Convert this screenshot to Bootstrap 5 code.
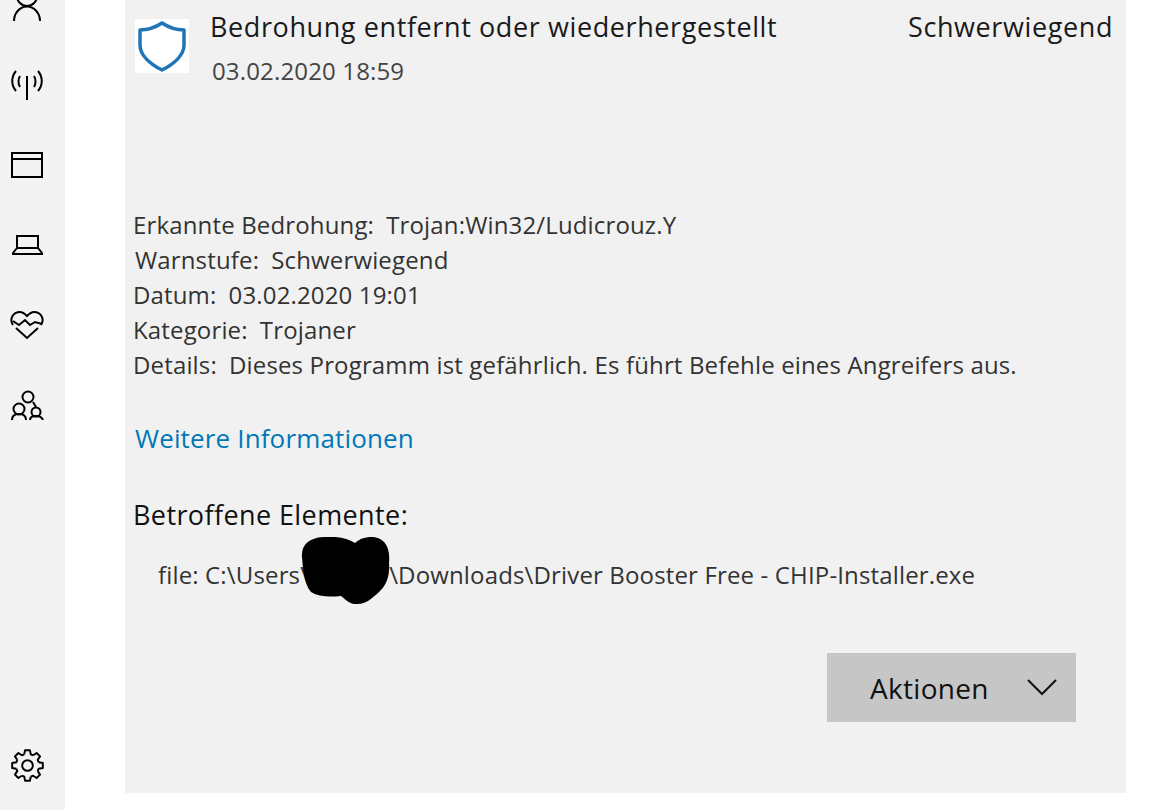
<!DOCTYPE html>
<html lang="de">
<head>
    <meta charset="UTF-8">
    <meta name="viewport" content="width=device-width, initial-scale=1.0">
    <title>Bedrohung entfernt</title>
    <link href="https://cdn.jsdelivr.net/npm/bootstrap@5.3.0/dist/css/bootstrap.min.css" rel="stylesheet">
    <style>
        html, body {
            height: 810px;
            overflow: hidden;
            background: #fff;
        }
        body {
            font-family: "Open Sans", "Noto Sans", sans-serif;
            font-size: 24px;
            color: #333;
            letter-spacing: 0.15px;
        }
        .side-bar {
            width: 65px;
            height: 810px;
            background: #f3f3f3;
            flex: none;
            padding-right: 11px;
        }
        .side-slot {
            height: 80px;
        }
        .side-slot svg, .gear-slot svg, .side-top svg {
            display: block;
            fill: none;
            stroke: #000;
            stroke-width: 2;
        }
        .side-top {
            height: 45px;
        }
        .gear-slot {
            margin-bottom: 28px;
        }
        .threat-panel {
            width: 1001px;
            height: 793px;
            margin-left: 60px;
            background: #f1f1f1;
            padding: 8px 13px 71px 8px;
        }
        .shield-box {
            width: 54px;
            height: 54px;
            margin: 11px 21px 0 2px;
            background: #fff;
            flex: none;
        }
        .threat-title {
            color: #1a1a1a;
            font-size: 27px;
            letter-spacing: 0.6px;
            line-height: 38px;
        }
        .threat-date {
            margin: 7px 0 0 2px;
            line-height: 36px;
            color: #444;
        }
        .detail-list {
            margin-top: 118px;
            line-height: 35px;
        }
        .warn-row {
            margin-left: 2px;
        }
        .info-link {
            display: block;
            margin: 37px 0 0 2px;
            line-height: 38px;
            color: #0078b8;
            font-size: 26px;
            letter-spacing: 0.15px;
            text-decoration: none;
        }
        .affected-head {
            margin-top: 39px;
            line-height: 38px;
            color: #111;
            font-size: 27px;
            letter-spacing: 0.4px;
        }
        .file-line {
            margin: 22px 0 0 25px;
            line-height: 38px;
        }
        .blacked-out {
            display: inline-block;
            width: 88px;
            height: 38px;
            margin-left: -8px;
            position: relative;
            vertical-align: top;
        }
        .blacked-out svg {
            position: absolute;
            left: 0;
            top: -19px;
        }
        .action-btn {
            width: 249px;
            height: 69px;
            margin-right: 37px;
            background: #c6c6c6;
            color: #111;
            font-size: 28px;
            letter-spacing: 0.3px;
            padding: 0 19px 0 43px;
        }
        .action-btn svg {
            fill: none;
            stroke: #111;
            stroke-width: 2;
        }
    </style>
</head>
<body>
    <div class="d-flex">
        <div class="side-bar d-flex flex-column align-items-center">
            <div class="side-top">
                <svg width="30" height="21" viewBox="0 0 30 21">
                    <circle cx="15" cy="-4" r="10"/>
                    <path d="M2 21c0-8 6-14.500 13-14.500s13 6.500 13 14.500"/>
                </svg>
            </div>
            <div class="side-slot d-flex align-items-center justify-content-center">
                <svg width="32" height="30" viewBox="0 0 32 30">
                    <path d="M16 6v24"/>
                    <path d="M9 6c-2 3-2 8 0 11M23 6c2 3 2 8 0 11"/>
                    <path d="M5 1c-5 6-5 14 0 20M27 1c5 6 5 14 0 20"/>
                </svg>
            </div>
            <div class="side-slot d-flex align-items-center justify-content-center">
                <svg width="33" height="26" viewBox="0 0 33 26">
                    <rect x="1" y="1" width="30" height="24"/>
                    <path d="M1 7h30"/>
                </svg>
            </div>
            <div class="side-slot d-flex align-items-center justify-content-center">
                <svg width="31" height="20" viewBox="0 0 31 20">
                    <path d="M5 13V1h21v12"/>
                    <path d="M5 13L1 18v1h29v-1l-4-5z"/>
                </svg>
            </div>
            <div class="side-slot d-flex align-items-center justify-content-center">
                <svg width="34" height="30" viewBox="0 0 34 30">
                    <path d="M3 15C-1 9 3 2 10 2c3 0 5 2 7 4 2-2 4-4 7-4 7 0 11 7 7 13"/>
                    <path d="M3 11l6 4 6-5 5 5 5-3 7 2"/>
                    <path d="M6 18l11 10 11-10"/>
                </svg>
            </div>
            <div class="side-slot d-flex align-items-center justify-content-center">
                <svg width="34" height="30" viewBox="0 0 34 30">
                    <circle cx="18" cy="7" r="5.500"/>
                    <circle cx="9" cy="19" r="5.500"/>
                    <circle cx="26" cy="22" r="4.500"/>
                    <path d="M2 30c0-4 3-6 7-6s7 2 7 6M20 30c0-3 3-4 6-4s6 1 7 4M23 12l3 5"/>
                </svg>
            </div>
            <div class="gear-slot mt-auto">
                <svg width="33" height="33" viewBox="0 0 34 34" stroke-linejoin="round">
                    <defs>
                        <path id="gear-tooth" d="M13.690 5.460L14.500 1.200H19.500L20.310 5.460L22.820 6.500"/>
                    </defs>
                    <circle cx="17" cy="17" r="5.500"/>
                    <use href="#gear-tooth"/>
                    <use href="#gear-tooth" transform="rotate(45 17 17)"/>
                    <use href="#gear-tooth" transform="rotate(90 17 17)"/>
                    <use href="#gear-tooth" transform="rotate(135 17 17)"/>
                    <use href="#gear-tooth" transform="rotate(180 17 17)"/>
                    <use href="#gear-tooth" transform="rotate(225 17 17)"/>
                    <use href="#gear-tooth" transform="rotate(270 17 17)"/>
                    <use href="#gear-tooth" transform="rotate(315 17 17)"/>
                </svg>
            </div>
        </div>
        <div class="threat-panel d-flex flex-column">
            <div class="d-flex">
                <div class="shield-box d-flex align-items-center justify-content-center">
                    <svg width="48" height="52" viewBox="0 0 48 52" fill="none" stroke="#1f75b5" stroke-width="3.500">
                        <path d="M2 10c8 0 16-3 22-7 6 4 14 7 22 7v15c0 10-10 19-22 25C12 44 2 35 2 25z" stroke-linejoin="round"/>
                    </svg>
                </div>
                <div class="flex-grow-1">
                    <div class="d-flex justify-content-between threat-title">
                        <span>Bedrohung entfernt oder wiederhergestellt</span>
                        <span>Schwerwiegend</span>
                    </div>
                    <div class="threat-date">03.02.2020 18:59</div>
                </div>
            </div>
            <div class="detail-list">
                <div>Erkannte Bedrohung:&ensp;Trojan:Win32/Ludicrouz.Y</div>
                <div class="warn-row">Warnstufe:&ensp;Schwerwiegend</div>
                <div>Datum:&ensp;03.02.2020 19:01</div>
                <div>Kategorie:&ensp;Trojaner</div>
                <div>Details:&ensp;Dieses Programm ist gefährlich. Es führt Befehle eines Angreifers aus.</div>
            </div>
            <a class="info-link" href="#">Weitere Informationen</a>
            <div class="affected-head">Betroffene Elemente:</div>
            <div class="file-line d-flex">
                <span>file: C:\Users\</span>
                <span class="blacked-out">
                    <svg width="90" height="68" viewBox="0 0 90 68">
                        <path d="M1 20C0 8 8 1 22 0c14-1 24 1 32 6 6-6 18-8 25-4 8 4 10 14 9 24 1 12-2 22-10 29-7 6-13 13-24 12-6 0-11-6-14-8-12 1-22 1-30-4C3 47 2 32 1 20z" fill="#000"/>
                    </svg>
                </span>
                <span>\Downloads\Driver Booster Free - CHIP-Installer.exe</span>
            </div>
            <button type="button" class="btn rounded-0 border-0 action-btn d-flex align-items-center justify-content-between mt-auto ms-auto">
                <span>Aktionen</span>
                <svg width="30" height="18" viewBox="0 0 30 18">
                    <path d="M1 1l14 14L29 1"/>
                </svg>
            </button>
        </div>
    </div>
    <script src="https://cdn.jsdelivr.net/npm/bootstrap@5.3.0/dist/js/bootstrap.bundle.min.js"></script>
</body>
</html>
